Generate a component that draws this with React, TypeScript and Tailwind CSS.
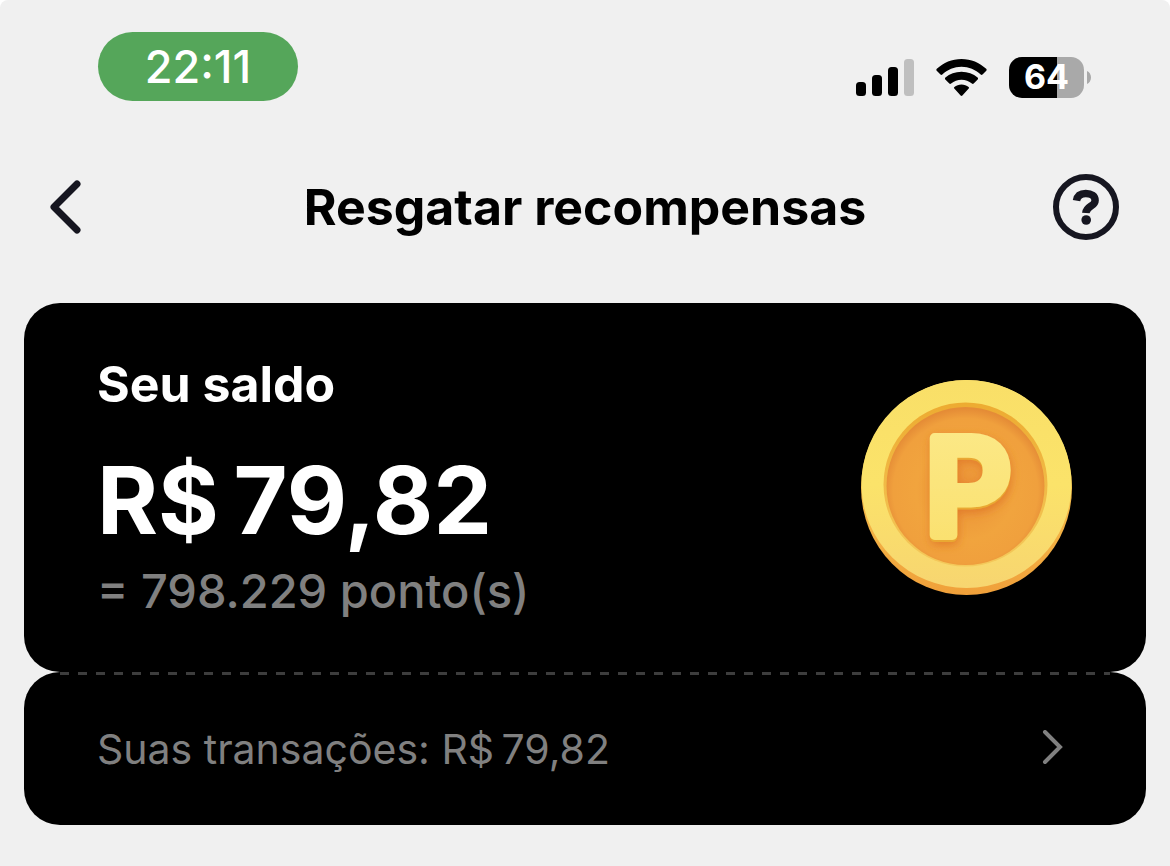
import React from 'react';

const SignalIcon: React.FC = () => (
  <svg width="58" height="37" viewBox="0 0 58 37" aria-hidden="true">
    <rect x="0" y="23" width="10" height="14" rx="3.500" />
    <rect x="16" y="16" width="10" height="21" rx="3.500" />
    <rect x="32" y="8" width="10" height="29" rx="3.500" />
    <rect x="48" y="0" width="10" height="37" rx="3.500" fill="#bfbfbf" />
  </svg>
);

const WifiIcon: React.FC = () => (
  <svg width="51" height="37" viewBox="0 0 51 37" aria-hidden="true">
    <path d="M.8 9.800C7.500 3.700 15.900 0 25.500 0s18 3.700 24.700 9.800c.6.600.6 1.300.1 1.900l-3.800 3.900c-.5.500-1.200.5-1.800 0C39.500 10.700 32.800 7.800 25.500 7.800S11.500 10.700 6.300 15.600c-.6.500-1.300.5-1.800 0L.7 11.700c-.5-.6-.5-1.300.1-1.900z" />
    <path d="M9.400 18.600C13.700 14.900 19.300 12.800 25.500 12.800s11.800 2.100 16.100 5.800c.6.600.6 1.300.1 1.800l-4 4.100c-.5.500-1.200.5-1.800.1-2.900-2.500-6.500-3.900-10.400-3.900s-7.500 1.400-10.400 3.900c-.6.400-1.300.4-1.800-.1l-4-4.100c-.5-.5-.5-1.200.1-1.800z" />
    <path d="M18.400 27.900c1.900-1.600 4.400-2.500 7.100-2.500s5.200.9 7.100 2.500c.6.500.6 1.200.1 1.700l-6.300 6.900c-.5.500-1.300.5-1.800 0l-6.300-6.900c-.5-.5-.5-1.200.1-1.700z" />
  </svg>
);

const Battery: React.FC<{ level: number }> = ({ level }) => (
  <div className="flex items-center gap-[3px]">
    <div
      className="flex h-[41px] w-[75px] items-center justify-center rounded-[13px] text-[34px] leading-none font-bold text-white"
      style={{ background: `linear-gradient(90deg, #000 ${level}%, #a9a9a9 ${level}%)` }}
    >
      {level}
    </div>
    <svg width="4" height="13" viewBox="0 0 4 13" aria-hidden="true">
      <path d="M0 0C2.500 1.200 4 3.600 4 6.500S2.500 11.800 0 13z" fill="#a9a9a9" />
    </svg>
  </div>
);

const Coin: React.FC = () => (
  <svg width="212" height="216" viewBox="0 0 212 216" role="img" aria-label="Moeda de pontos">
    <defs>
      <linearGradient id="edge" x1="0" y1="0" x2="0" y2="1">
        <stop offset="0" stopColor="#fbd56b" />
        <stop offset="0.5" stopColor="#f5bd4b" />
        <stop offset="1" stopColor="#f0a03a" />
      </linearGradient>
      <linearGradient id="face" x1="0" y1="0" x2="0" y2="1">
        <stop offset="0" stopColor="#f9df68" />
        <stop offset="0.5" stopColor="#fbe36a" />
        <stop offset="1" stopColor="#f7d570" />
      </linearGradient>
      <linearGradient id="lip" x1="0" y1="0" x2="0" y2="1">
        <stop offset="0" stopColor="#edab31" />
        <stop offset="1" stopColor="#f4c95b" />
      </linearGradient>
      <radialGradient id="well" cx="0.5" cy="0.53" r="0.52">
        <stop offset="0" stopColor="#ea9137" />
        <stop offset="0.6" stopColor="#f1a43e" />
        <stop offset="0.88" stopColor="#f0a03d" />
        <stop offset="1" stopColor="#e58c36" />
      </radialGradient>
      <linearGradient id="letter" x1="0" y1="0" x2="0" y2="1">
        <stop offset="0" stopColor="#fcea8b" />
        <stop offset="1" stopColor="#fadf6b" />
      </linearGradient>
      <filter id="glow" x="-30%" y="-30%" width="160%" height="160%">
        <feDropShadow dx="1" dy="3" stdDeviation="5" floodColor="#df7426" floodOpacity="0.8" />
      </filter>
    </defs>
    <ellipse cx="105.500" cy="107.500" rx="105.500" ry="107.500" fill="url(#edge)" />
    <ellipse cx="105.500" cy="104" rx="105" ry="104" fill="url(#face)" />
    <ellipse cx="104.500" cy="104.500" rx="82" ry="82" fill="url(#lip)" />
    <ellipse cx="104.500" cy="106" rx="79" ry="79" fill="url(#well)" />
    <g
      fontFamily="Inter, sans-serif"
      fontWeight="600"
      fontSize="134"
      strokeWidth="10"
      strokeLinejoin="round"
      filter="url(#glow)"
    >
      <text x="64" y="157" fill="#eaa831" stroke="#eaa831" aria-hidden="true">P</text>
      <text x="64" y="155" fill="url(#letter)" stroke="url(#letter)">P</text>
    </g>
  </svg>
);

const StatusBar: React.FC = () => (
  <div className="flex items-center justify-between pr-[79px] pl-[98px]">
    <time className="flex h-[69px] w-[200px] items-center justify-center rounded-full bg-[#55a65a] text-[45px] leading-none font-medium text-white">
      22:11
    </time>
    <div className="flex items-center gap-[22px] pt-[21px]">
      <SignalIcon />
      <WifiIcon />
      <Battery level={64} />
    </div>
  </div>
);

const Header: React.FC = () => (
  <header className="flex items-center justify-between px-[50px] text-[#161620]">
    <button type="button" aria-label="Voltar" className="flex w-[68px] items-center">
      <svg width="32" height="54" viewBox="0 0 32 54" fill="none" stroke="currentColor">
        <path d="M27 4L4 27l23 23" strokeWidth="7" strokeLinecap="round" strokeLinejoin="round" />
      </svg>
    </button>
    <h1 className="text-[50px] leading-[66px] font-bold whitespace-nowrap text-black">Resgatar recompensas</h1>
    <button type="button" aria-label="Ajuda" className="flex w-[68px] justify-end">
      <svg width="68" height="66" viewBox="0 0 68 66" fill="none" stroke="currentColor">
        <circle cx="34" cy="33" r="30" strokeWidth="6" />
        <path d="M24.500 26.600c.8-4.800 4.200-7.100 9.300-7.100 5.700 0 9.300 2.600 9.300 6.900 0 6.200-8.700 5.400-9.300 12.600" strokeWidth="7.500" />
        <circle cx="34.200" cy="46" r="4.800" fill="currentColor" stroke="none" />
      </svg>
    </button>
  </header>
);

export default function App() {
  return (
    <div className="min-h-screen rounded-t-lg bg-[#f0f0f0] pt-8 font-['Inter',sans-serif]">
      <StatusBar />
      <div className="pt-[73px]">
        <Header />
      </div>

      <main className="px-6 pt-[63px]">
        <section className="flex items-center justify-between rounded-[36px] bg-black py-[51px] pr-[73px] pl-[73px]">
          <div>
            <h2 className="text-[50px] leading-[60px] font-bold text-white">Seu saldo</h2>
            <p className="pt-8 text-[93px] leading-[108px] font-bold whitespace-nowrap text-white">R$&#8201;79,82</p>
            <p className="pt-[7px] text-[47px] leading-[60px] font-medium whitespace-nowrap text-[#808080]">= 798.229 ponto(s)</p>
          </div>
          <Coin />
        </section>

        <section className="rounded-[36px] bg-black">
          <svg className="block h-[3px] w-full px-9" aria-hidden="true">
            <line x1="0" y1="1.500" x2="100%" y2="1.500" stroke="#3d3d3d" strokeWidth="3" strokeDasharray="9 9" />
          </svg>
          <a href="#transacoes" className="flex items-center justify-between pt-12 pr-[83px] pb-[50px] pl-[73px] text-[#808080]">
            <span className="text-[41px] leading-[52px]">Suas transações: R$&#8201;79,82</span>
            <svg width="22" height="38" viewBox="0 0 22 38" fill="none" stroke="currentColor" aria-hidden="true">
              <path d="M4 2l15 15L4 32" strokeWidth="4" strokeLinecap="round" />
            </svg>
          </a>
        </section>
      </main>
    </div>
  );
}
